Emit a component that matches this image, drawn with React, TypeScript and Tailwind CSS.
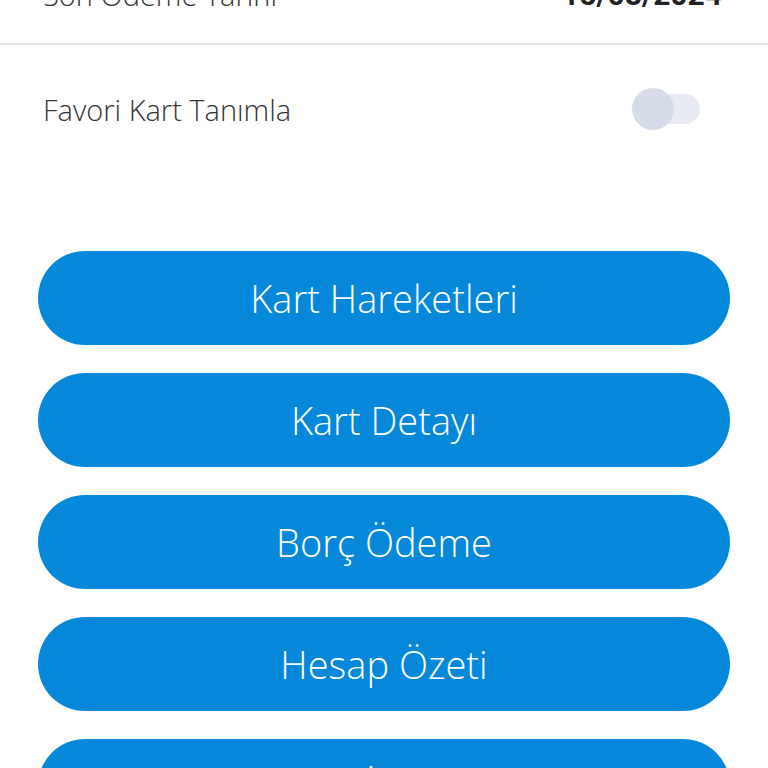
import React from "react";

const buttons = ["Kart Hareketleri", "Kart Detayı", "Borç Ödeme", "Hesap Özeti", "Taksit İşlemleri"];

export default function App() {
  return (
    <div className="w-[768px] h-[768px] overflow-hidden bg-white" style={{ fontFamily: '"Open Sans", "Noto Sans", sans-serif' }}>
      <div className="flex items-end justify-between pl-[43px] pr-[46px] h-[45px] border-b-2 border-[#e1e4e8]">
        <div className="w-full h-[45px] relative">
          <span className="text-[29px] font-light text-[#333] leading-none absolute left-0 -top-[18px]">Son Ödeme Tarihi</span>
          <span className="text-[30px] font-bold text-[#222] leading-none absolute right-0 -top-[18px]" style={{ fontFamily: 'Roboto, "Liberation Sans", sans-serif' }}>15/08/2024</span>
        </div>
      </div>
      <div className="flex items-center justify-between pl-[43px] pr-[68px] h-[130px]">
        <span className="text-[29px] font-light text-[#333] -mt-[1px]">Favori Kart Tanımla</span>
        <div className="relative w-[60px] h-[30px] rounded-full bg-[#e8eaf3] -mt-[2px]">
          <div className="absolute -left-[8px] -top-[6px] w-[42px] h-[42px] rounded-full bg-[#d6dcea]" />
        </div>
      </div>
      <div className="flex flex-col gap-[28px] px-[38px] mt-[76px]">
        {buttons.map((b) => (
          <div key={b} className="h-[94px] rounded-full bg-[#0588d9] flex items-center justify-center text-white text-[38px] font-light">
            {b}
          </div>
        ))}
      </div>
    </div>
  );
}
